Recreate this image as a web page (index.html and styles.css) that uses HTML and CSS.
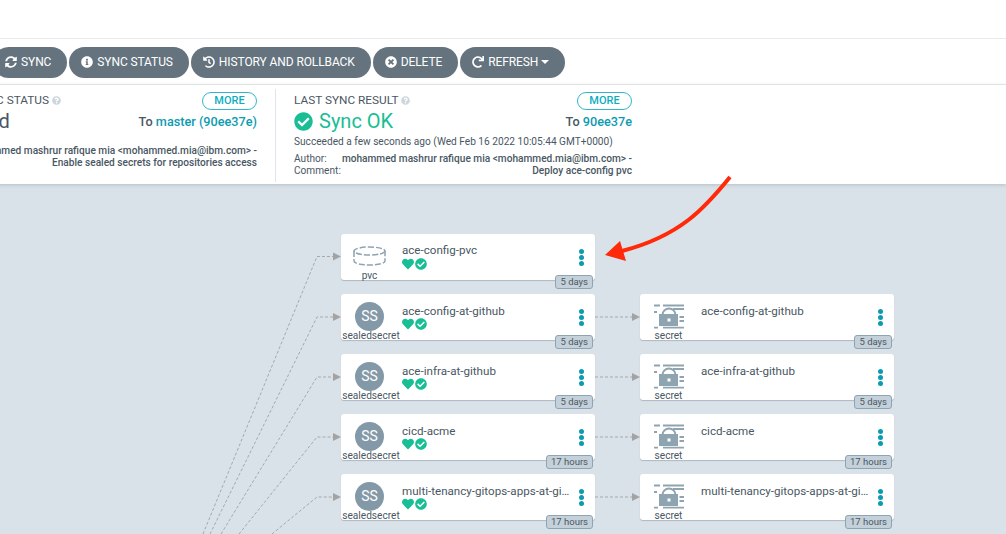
FILE: index.html
```html
<!DOCTYPE html>
<html>

<head>
    <title>ace-config</title>
    <meta charset="UTF-8">
    <link rel="stylesheet" href="styles.css">
</head>

<body>
    <svg width="0" height="0" class="defs">
        <symbol id="i-check" viewBox="0 0 512 512"><path d="M504 256c0 136.967-111.033 248-248 248S8 392.967 8 256 119.033 8 256 8s248 111.033 248 248zM227.314 387.314l184-184c6.248-6.248 6.248-16.379 0-22.627l-22.627-22.627c-6.248-6.249-16.379-6.249-22.628 0L216 308.118l-70.059-70.059c-6.248-6.248-16.379-6.248-22.628 0l-22.627 22.627c-6.248 6.248-6.248 16.379 0 22.627l104 104c6.249 6.249 16.379 6.249 22.628.001z"/></symbol>
        <symbol id="i-heart" viewBox="0 0 512 512"><path d="M462.3 62.6C407.5 15.9 326 24.3 275.7 76.2L256 96.5l-19.7-20.3C186.1 24.3 104.5 15.9 49.7 62.6c-62.8 53.6-66.1 149.8-9.9 207.9l193.5 199.8c12.5 12.9 32.8 12.9 45.3 0l193.5-199.8c56.3-58.1 53-154.3-9.8-207.9z"/></symbol>
        <symbol id="i-info" viewBox="0 0 512 512"><path d="M256 8C119.043 8 8 119.083 8 256c0 136.997 111.043 248 248 248s248-111.003 248-248C504 119.083 392.957 8 256 8zm0 110c23.196 0 42 18.804 42 42s-18.804 42-42 42-42-18.804-42-42 18.804-42 42-42zm56 254c0 6.627-5.373 12-12 12h-88c-6.627 0-12-5.373-12-12v-24c0-6.627 5.373-12 12-12h12v-64h-12c-6.627 0-12-5.373-12-12v-24c0-6.627 5.373-12 12-12h64c6.627 0 12 5.373 12 12v100h12c6.627 0 12 5.373 12 12v24z"/></symbol>
        <symbol id="i-times" viewBox="0 0 512 512"><path d="M256 8C119 8 8 119 8 256s111 248 248 248 248-111 248-248S393 8 256 8zm121.6 313.1c4.7 4.7 4.7 12.3 0 17L338 377.6c-4.7 4.7-12.3 4.7-17 0L256 312l-65.1 65.6c-4.7 4.7-12.3 4.7-17 0L134.4 338c-4.7-4.7-4.7-12.3 0-17l65.6-65-65.6-65.1c-4.7-4.7-4.7-12.3 0-17l39.6-39.6c4.7-4.7 12.3-4.7 17 0l65 65.7 65.1-65.6c4.7-4.7 12.3-4.7 17 0l39.6 39.6c4.7 4.7 4.7 12.3 0 17L312 256l65.6 65.1z"/></symbol>
        <symbol id="i-help" viewBox="0 0 512 512"><path d="M504 256c0 136.997-111.043 248-248 248S8 392.997 8 256C8 119.083 119.043 8 256 8s248 111.083 248 248zM262.655 90c-54.497 0-89.255 22.957-116.549 63.758-3.536 5.286-2.353 12.415 2.715 16.258l34.699 26.31c5.205 3.947 12.621 3.008 16.665-2.122 17.864-22.658 30.113-35.797 57.303-35.797 20.429 0 45.698 13.148 45.698 32.958 0 14.976-12.363 22.667-32.534 33.976C247.128 238.528 216 254.941 216 296v4c0 6.627 5.373 12 12 12h56c6.627 0 12-5.373 12-12v-1.333c0-28.462 83.186-29.647 83.186-106.667 0-58.002-60.165-102-116.531-102zM256 338c-25.365 0-46 20.635-46 46 0 25.364 20.635 46 46 46s46-20.636 46-46c0-25.365-20.635-46-46-46z"/></symbol>
        <symbol id="i-sync" viewBox="0 0 512 512"><path d="M370.72 133.28C339.458 104.008 298.888 87.962 255.848 88c-77.458.068-144.328 53.178-162.791 126.85-1.344 5.363-6.122 9.15-11.651 9.15H24.103c-7.498 0-13.194-6.807-11.807-14.176C33.933 94.924 134.813 8 256 8c66.448 0 126.791 26.136 171.315 68.685L463.03 40.97C478.149 25.851 504 36.559 504 57.941V192c0 13.255-10.745 24-24 24H345.941c-21.382 0-32.09-25.851-16.971-40.971l41.75-41.749zM32 296h134.059c21.382 0 32.09 25.851 16.971 40.971l-41.75 41.75c31.262 29.273 71.835 45.319 114.876 45.28 77.418-.07 144.315-53.144 162.787-126.849 1.344-5.363 6.122-9.15 11.651-9.15h57.304c7.498 0 13.194 6.807 11.807 14.176C478.067 417.076 377.187 504 256 504c-66.448 0-126.791-26.136-171.315-68.685L48.97 471.03C33.851 486.149 8 475.441 8 454.059V320c0-13.255 10.745-24 24-24z"/></symbol>
        <symbol id="i-history" viewBox="0 0 512 512"><path d="M504 255.531c.253 136.64-111.18 248.372-247.82 248.468-59.015.042-113.223-20.53-155.822-54.911-11.077-8.94-11.905-25.541-1.839-35.607l11.267-11.267c8.609-8.609 22.353-9.551 31.891-1.984C173.062 425.135 212.781 440 256 440c101.705 0 184-82.311 184-184 0-101.705-82.311-184-184-184-48.814 0-93.149 18.969-126.068 49.932l50.754 50.754c10.08 10.08 2.941 27.314-11.313 27.314H24c-8.837 0-16-7.163-16-16V38.627c0-14.254 17.234-21.393 27.314-11.314l49.372 49.372C129.209 34.136 189.552 8 256 8c136.81 0 247.747 110.78 248 247.531zm-180.912 78.784l9.823-12.63c8.138-10.463 6.253-25.542-4.21-33.679L288 256.349V152c0-13.255-10.745-24-24-24h-16c-13.255 0-24 10.745-24 24v135.651l65.409 50.874c10.463 8.137 25.541 6.253 33.679-4.21z"/></symbol>
        <symbol id="i-redo" viewBox="0 0 512 512"><path d="M500.33 0h-47.41a12 12 0 0 0-12 12.57l4 82.76A247.42 247.42 0 0 0 256 8C119.34 8 7.9 119.53 8 256.19 8.1 393.07 119.1 504 256 504a247.1 247.1 0 0 0 166.18-63.91 12 12 0 0 0 .48-17.43l-34-34a12 12 0 0 0-16.38-.55A176 176 0 1 1 402.1 157.8l-101.53-4.87a12 12 0 0 0-12.57 12v47.41a12 12 0 0 0 12 12h200.33a12 12 0 0 0 12-12V12a12 12 0 0 0-12-12z"/></symbol>
        <symbol id="i-secret" viewBox="0 0 30 25">
            <path d="M0 1.500h6M9 1.500h21M19 5h11M25.500 13h4.500M25.500 17h4.500M0 8h3M0 23.700h4M9 23.700h21" fill="none" stroke="#8fa4b1" stroke-width="1.800"/>
            <path d="M8.500 11a6.500 6.500 0 0 1 13 0" fill="none" stroke="#8fa4b1" stroke-width="2"/>
            <path d="M5 10h19v12H5zM13.500 14.500v3h3v-3z" fill="#8fa4b1" fill-rule="evenodd"/>
        </symbol>
    </svg>

    <div class="topbar"></div>

    <div class="toolbar">
        <button class="btn"><svg class="ic"><use href="#i-sync"/></svg>SYNC</button>
        <button class="btn"><svg class="ic"><use href="#i-info"/></svg>SYNC STATUS</button>
        <button class="btn"><svg class="ic"><use href="#i-history"/></svg>HISTORY AND ROLLBACK</button>
        <button class="btn"><svg class="ic"><use href="#i-times"/></svg>DELETE</button>
        <button class="btn"><svg class="ic"><use href="#i-redo"/></svg>REFRESH<span class="caret"></span></button>
    </div>

    <div class="status">
        <div class="panel panel-sync">
            <div class="panel-head">
                <span class="panel-title">CURRENT SYNC STATUS<svg class="help"><use href="#i-help"/></svg></span>
                <span class="more">MORE</span>
            </div>
            <div class="panel-main">
                <span class="big big-dark">Synced</span>
                <span class="to">To <a>master (90ee37e)</a></span>
            </div>
            <div class="commit">
                <div>mohammed mashrur rafique mia &lt;mohammed.mia@ibm.com&gt; -</div>
                <div>Enable sealed secrets for repositories access</div>
            </div>
        </div>
        <div class="panel panel-result">
            <div class="panel-head">
                <span class="panel-title">LAST SYNC RESULT<svg class="help"><use href="#i-help"/></svg></span>
                <span class="more">MORE</span>
            </div>
            <div class="panel-main">
                <span class="big"><svg class="big-icon"><use href="#i-check"/></svg>Sync OK</span>
                <span class="to">To <a>90ee37e</a></span>
            </div>
            <div class="when">Succeeded a few seconds ago (Wed Feb 16 2022 10:05:44 GMT+0000)</div>
            <div class="meta"><span>Author:</span><b>mohammed mashrur rafique mia &lt;mohammed.mia@ibm.com&gt; -</b></div>
            <div class="meta"><span>Comment:</span><b>Deploy ace-config pvc</b></div>
        </div>
    </div>

    <div class="graph">
        <svg class="edges" width="1006" height="350" viewBox="0 184 1006 350">
            <g class="edge">
                <path d="M203 534L317 256.500H333"/>
                <path d="M210 534L317 317H333"/>
                <path d="M221 534L317 377H333"/>
                <path d="M239 534L317 437H333"/>
                <path d="M272 534L317 497H333"/>
                <path d="M595 317H633"/>
                <path d="M595 377H633"/>
                <path d="M595 437H633"/>
                <path d="M595 497H633"/>
            </g>
            <g class="edge-head">
                <path d="M333 252.500V260.500L341 256.500z"/>
                <path d="M333 313V321L341 317z"/>
                <path d="M333 373V381L341 377z"/>
                <path d="M333 433V441L341 437z"/>
                <path d="M333 493V501L341 497z"/>
                <path d="M632 313V321L640 317z"/>
                <path d="M632 373V381L640 377z"/>
                <path d="M632 433V441L640 437z"/>
                <path d="M632 493V501L640 497z"/>
            </g>
        </svg>

        <div class="nodes">
            <div class="node">
                <div class="kind">
                    <svg class="kind-icon" viewBox="0 0 33 20"><g fill="none" stroke="#8fa4b1" stroke-width="1.500" stroke-dasharray="6 2"><ellipse cx="16.500" cy="5" rx="15.500" ry="4"/><path d="M1 5V15C1 17.500 8.500 19 16.500 19S32 17.500 32 15V5"/></g></svg>
                    <span class="kind-label">pvc</span>
                </div>
                <div class="info">
                    <div class="name">ace-config-pvc</div>
                    <div class="health"><svg><use href="#i-heart"/></svg><svg><use href="#i-check"/></svg></div>
                </div>
                <div class="dots"><i></i><i></i><i></i></div>
                <span class="age">5 days</span>
            </div>
            <div></div>

            <div class="node">
                <div class="kind"><span class="avatar">SS</span><span class="kind-label">sealedsecret</span></div>
                <div class="info">
                    <div class="name">ace-config-at-github</div>
                    <div class="health"><svg><use href="#i-heart"/></svg><svg><use href="#i-check"/></svg></div>
                </div>
                <div class="dots"><i></i><i></i><i></i></div>
                <span class="age">5 days</span>
            </div>
            <div class="node">
                <div class="kind"><svg class="secret-icon"><use href="#i-secret"/></svg><span class="kind-label">secret</span></div>
                <div class="info"><div class="name">ace-config-at-github</div></div>
                <div class="dots"><i></i><i></i><i></i></div>
                <span class="age">5 days</span>
            </div>

            <div class="node">
                <div class="kind"><span class="avatar">SS</span><span class="kind-label">sealedsecret</span></div>
                <div class="info">
                    <div class="name">ace-infra-at-github</div>
                    <div class="health"><svg><use href="#i-heart"/></svg><svg><use href="#i-check"/></svg></div>
                </div>
                <div class="dots"><i></i><i></i><i></i></div>
                <span class="age">5 days</span>
            </div>
            <div class="node">
                <div class="kind"><svg class="secret-icon"><use href="#i-secret"/></svg><span class="kind-label">secret</span></div>
                <div class="info"><div class="name">ace-infra-at-github</div></div>
                <div class="dots"><i></i><i></i><i></i></div>
                <span class="age">5 days</span>
            </div>

            <div class="node">
                <div class="kind"><span class="avatar">SS</span><span class="kind-label">sealedsecret</span></div>
                <div class="info">
                    <div class="name">cicd-acme</div>
                    <div class="health"><svg><use href="#i-heart"/></svg><svg><use href="#i-check"/></svg></div>
                </div>
                <div class="dots"><i></i><i></i><i></i></div>
                <span class="age">17 hours</span>
            </div>
            <div class="node">
                <div class="kind"><svg class="secret-icon"><use href="#i-secret"/></svg><span class="kind-label">secret</span></div>
                <div class="info"><div class="name">cicd-acme</div></div>
                <div class="dots"><i></i><i></i><i></i></div>
                <span class="age">17 hours</span>
            </div>

            <div class="node">
                <div class="kind"><span class="avatar">SS</span><span class="kind-label">sealedsecret</span></div>
                <div class="info">
                    <div class="name">multi-tenancy-gitops-apps-at-github</div>
                    <div class="health"><svg><use href="#i-heart"/></svg><svg><use href="#i-check"/></svg></div>
                </div>
                <div class="dots"><i></i><i></i><i></i></div>
                <span class="age">17 hours</span>
            </div>
            <div class="node">
                <div class="kind"><svg class="secret-icon"><use href="#i-secret"/></svg><span class="kind-label">secret</span></div>
                <div class="info"><div class="name">multi-tenancy-gitops-apps-at-github</div></div>
                <div class="dots"><i></i><i></i><i></i></div>
                <span class="age">17 hours</span>
            </div>
        </div>

        <svg class="callout" width="140" height="95" viewBox="600 170 140 95">
            <path d="M730 177C705 208 680 236 622 251" fill="none" stroke="#ff2a0a" stroke-width="4"/>
            <path d="M605 255L620 241L626 261z" fill="#ff2a0a"/>
        </svg>
    </div>
</body>

</html>
```

FILE: styles.css
```css
html, body {
    margin: 0;
    height: 534px;
    overflow: hidden;
    background: #fff;
    font-family: Roboto, "Liberation Sans", sans-serif;
    color: #495763;
}
.defs {
    position: absolute;
}
.topbar {
    height: 38px;
    border-bottom: 1px solid #e8ebed;
}

/* toolbar */
.toolbar {
    height: 46px;
    box-sizing: border-box;
    padding-top: 8px;
    margin-left: -7px;
    display: flex;
    gap: 2px;
    border-bottom: 1px solid #e8ebed;
    width: 1013px;
}
.btn {
    height: 31px;
    border: 0;
    border-radius: 16px;
    padding: 0 16px 1px 12px;
    background: #64737e;
    color: #fff;
    font: 400 12px Roboto, sans-serif;
    letter-spacing: -0.1px;
    display: flex;
    align-items: center;
    white-space: nowrap;
}
.ic {
    width: 12px;
    height: 12px;
    margin-right: 4px;
    fill: #fff;
}
.caret {
    margin-left: 3px;
    border-top: 4px solid #fff;
    border-left: 4px solid transparent;
    border-right: 4px solid transparent;
}

/* status panels */
.status {
    height: 99px;
    box-sizing: border-box;
    padding-top: 4px;
    margin-left: -81px;
    width: 1087px;
    display: flex;
    position: relative;
    z-index: 1;
    background: #fff;
    box-shadow: 0 1px 4px rgba(73, 87, 99, 0.25);
}
.panel {
    width: 338px;
    height: 93px;
    box-sizing: border-box;
}
.panel-sync {
    border-right: 1px solid #dee6eb;
    width: 357px;
    padding-right: 18px;
}
.panel-result {
    margin-left: 18px;
}
.panel-head {
    display: flex;
    justify-content: space-between;
    align-items: center;
    height: 18px;
    font-size: 11.800px;
    padding-top: 3px;
}
.panel-title {
    margin-top: -2px;
}
.help {
    width: 9px;
    height: 9px;
    margin-left: 3px;
    fill: #ccd6dd;
    vertical-align: -1px;
}
.more {
    box-sizing: border-box;
    width: 55px;
    height: 18px;
    border: 1px solid #2fb8ca;
    border-radius: 9px;
    color: #0dadc1;
    font-size: 11px;
    font-weight: 500;
    line-height: 16px;
    text-align: center;
}
.panel-main {
    display: flex;
    justify-content: space-between;
    align-items: center;
    height: 24px;
    margin-top: -1px;
}
.big {
    display: flex;
    align-items: center;
    font-size: 20px;
    color: #18be94;
}
.big-dark {
    color: #495763;
    padding-left: 26px;
}
.big-icon {
    width: 19px;
    height: 19px;
    margin-right: 6px;
    fill: #18be94;
}
.to {
    font-size: 12.700px;
    font-weight: 500;
}
.to a {
    color: #0d9bb0;
}
.commit {
    margin-top: 12px;
    font-size: 10.150px;
    font-weight: 500;
    line-height: 12px;
    text-align: right;
    white-space: nowrap;
}
.when {
    margin-top: 3px;
    font-size: 10.150px;
    line-height: 12px;
    white-space: nowrap;
}
.meta {
    display: flex;
    justify-content: space-between;
    font-size: 10.150px;
    line-height: 12px;
}
.when + .meta {
    margin-top: 5px;
}
.meta b {
    font-weight: 500;
}

/* resource graph */
.graph {
    position: relative;
    height: 350px;
    background: #dae2e9;
}
.edges {
    position: absolute;
    left: 0;
    top: 0;
}
.edge path {
    fill: none;
    stroke: #a3a9ad;
    stroke-width: 1;
    stroke-dasharray: 3 2;
}
.edge-head path {
    fill: #a3a3a3;
}
.callout {
    position: absolute;
    z-index: 2;
    left: 600px;
    top: -14px;
}
.nodes {
    position: relative;
    display: grid;
    grid-template-columns: 254px 254px;
    grid-auto-rows: 46px;
    column-gap: 45px;
    row-gap: 14px;
    padding: 50px 0 0 341px;
}
.node {
    position: relative;
    display: flex;
    background: #fff;
    border-radius: 3px;
    box-shadow: 0 1px 1px rgba(73, 87, 99, 0.3);
}
.node:first-child .name {
    margin-top: -1px;
    margin-bottom: 1px;
}
.kind {
    width: 57px;
    flex: none;
    display: flex;
    flex-direction: column;
    align-items: center;
    padding-top: 8px;
    box-sizing: border-box;
}
.kind > * {
    flex: none;
}
.kind-icon {
    width: 33px;
    height: 20px;
    margin-top: 4px;
    margin-bottom: 4px;
}
.secret-icon {
    width: 30px;
    height: 25px;
    margin-top: 2px;
    margin-bottom: 1px;
}
.avatar {
    width: 29px;
    height: 29px;
    border-radius: 50%;
    background: #8499a8;
    color: #fff;
    font-size: 14px;
    line-height: 29px;
    text-align: center;
}
.avatar + .kind-label {
    margin-left: 3px;
    margin-top: -1px;
}
.kind-label {
    font-size: 10.100px;
    line-height: 12px;
    white-space: nowrap;
}
.info {
    width: 172px;
    padding: 10px 0 0 4px;
    box-sizing: border-box;
}
.name {
    font-size: 11.600px;
    line-height: 15px;
    white-space: nowrap;
    overflow: hidden;
    text-overflow: ellipsis;
}
.health {
    display: flex;
    gap: 1px;
    margin-top: -1px;
}
.health svg {
    width: 12px;
    height: 12px;
    fill: #18be94;
}
.dots {
    margin-left: 9px;
    display: flex;
    flex-direction: column;
    justify-content: center;
    gap: 1px;
}
.dots i {
    width: 5px;
    height: 5px;
    border-radius: 50%;
    background: #0d9bb0;
}
.age {
    position: absolute;
    right: 2px;
    bottom: -9px;
    box-sizing: border-box;
    height: 14px;
    padding: 0 4px;
    border: 1px solid #8fa4b1;
    border-radius: 3px;
    background: #c5d1da;
    font-size: 9.500px;
    line-height: 12px;
}
```
